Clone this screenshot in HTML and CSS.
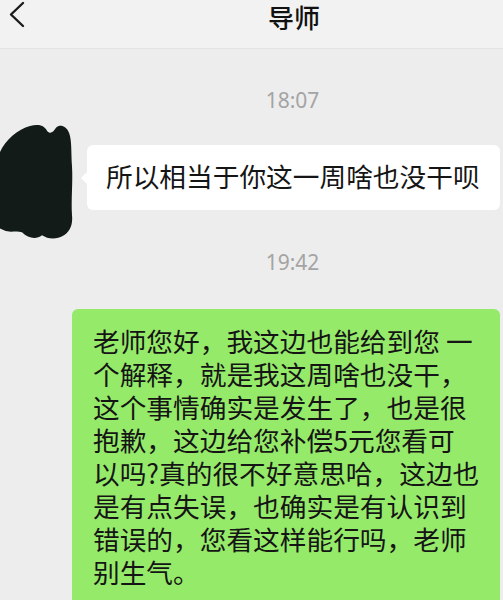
FILE: index.html
```html
<!DOCTYPE html>
<html lang="zh-CN">
<head>
    <meta charset="UTF-8">
    <title>导师</title>
    <link rel="stylesheet" href="styles.css">
</head>
<body>
    <div class="top-bar">
        <span class="back">
            <svg width="30" height="30" viewBox="0 0 30 30">
                <path d="M15 3 L3 14.5 L15 26" fill="none" stroke="#1b1b1b" stroke-width="2.4" stroke-linecap="round" stroke-linejoin="round"/>
            </svg>
        </span>
        <h1 class="title">导师</h1>
    </div>
    <div class="chat">
        <p class="time first">18:07</p>
        <div class="msg-row">
            <div class="avatar">
                <svg width="74" height="118" viewBox="0 0 74 122" preserveAspectRatio="none">
                    <path d="M0 30 C5 18 18 6 30 3 C38 1 44 2 47 8 C50 12 53 10 56 5 C60 1 66 3 69 10 C72 18 71 30 72 45 C73 60 71 80 72 95 C73 105 70 112 64 116 C56 121 48 120 42 116 C36 121 28 119 22 113 C16 111 10 114 4 111 L0 109 Z" fill="#121b17"/>
                </svg>
            </div>
            <div class="bubble white">所以相当于你这一周啥也没干呗</div>
        </div>
        <p class="time">19:42</p>
        <div class="bubble green">老师您好，我这边也能给到您 一<br>个解释，就是我这周啥也没干，<br>这个事情确实是发生了，也是很<br>抱歉，这边给您补偿5元您看可<br>以吗?真的很不好意思哈，这边也<br>是有点失误，也确实是有认识到<br>错误的，您看这样能行吗，老师<br>别生气。</div>
    </div>
</body>
</html>
```

FILE: styles.css
```css
*{
    margin: 0;
    padding: 0;
    box-sizing: border-box;
}
body{
    width: 503px;
    height: 600px;
    overflow: hidden;
    background: #ededed;
    font-family: "Noto Sans CJK SC", "Noto Sans", sans-serif;
    color: #151515;
}
.top-bar{
    display: flex;
    align-items: flex-start;
    height: 49px;
    background: #f2f2f2;
    border-bottom: 1px solid #e3e3e3;
}
.back{
    width: 40px;
    padding: 0 0 0 8px;
    height: 30px;
}
.title{
    flex: 1;
    padding: 2px 0 0 45px;
    text-align: center;
    font-size: 26px;
    line-height: 30px;
    font-weight: 500;
    color: #111;
}
.time{
    padding-left: 82px;
    text-align: center;
    font-family: "Noto Sans", sans-serif;
    font-size: 21px;
    line-height: 24px;
    color: #a4a4a4;
    margin-top: 9px;
}
.time.first{
    margin-top: 39px;
}
.msg-row{
    display: flex;
    align-items: flex-start;
    margin-top: 11px;
}
.avatar{
    width: 74px;
    height: 118px;
}
.bubble{
    font-size: 26.7px;
    line-height: 33px;
    border-radius: 6px;
    white-space: nowrap;
}
.white{
    position: relative;
    background: #fff;
    margin: 22px 3px 0 13px;
    padding: 14px 19px 18px;
    flex: 1;
}
.white::before{
    content: "";
    position: absolute;
    left: -6px;
    top: 27px;
    border-top: 6px solid transparent;
    border-bottom: 6px solid transparent;
    border-right: 6px solid #fff;
}
.green{
    background: #95ea6a;
    margin: 35px 3px 0 72px;
    padding: 15px 20px 20px 21px;
}
```
